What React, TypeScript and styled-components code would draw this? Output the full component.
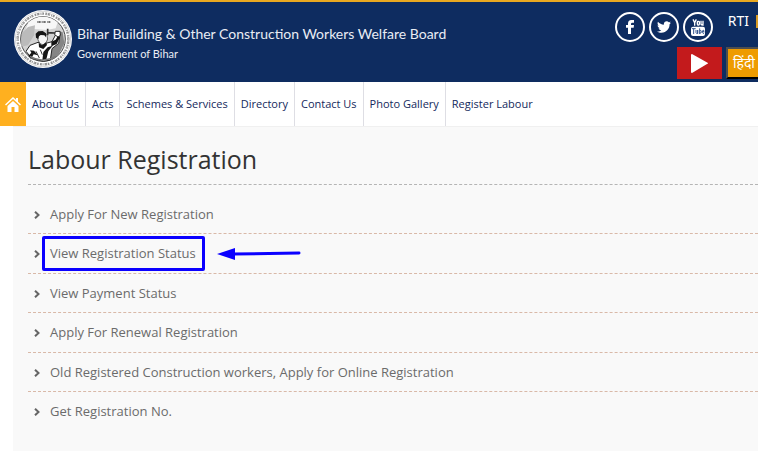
import React from "react";
import styled, { createGlobalStyle } from "styled-components";
import { FaTwitter } from "react-icons/fa";

const GlobalStyle = createGlobalStyle`
  *, *::before, *::after { box-sizing: border-box; }
  body {
    margin: 0;
    background: #fff;
    font-family: "Open Sans", "Noto Sans", sans-serif;
    overflow-x: hidden;
  }
`;

const Header = styled.header`
  display: flex;
  justify-content: space-between;
  align-items: flex-start;
  min-height: 82px;
  padding-left: 14px;
  border-top: 2px solid #e9a820;
  background: #0e2c60;
  color: #fff;
`;

const Brand = styled.a`
  display: flex;
  align-items: center;
  gap: 5px;
  padding-top: 8px;
  color: #e9edf4;
  text-decoration: none;
  white-space: nowrap;
`;

const BrandText = styled.span`
  display: flex;
  flex-direction: column;
  padding-top: 8px;
`;

const BrandTitle = styled.strong`
  font-family: Lato, sans-serif;
  font-size: 14px;
  font-weight: 400;
  line-height: 22px;
`;

const BrandSubtitle = styled.span`
  font-family: Lato, sans-serif;
  font-size: 11px;
  line-height: 18px;
`;

const Tools = styled.div`
  display: flex;
  flex-direction: column;
  align-items: flex-end;
  gap: 5px;
  padding-top: 10px;
`;

const ToolRow = styled.div`
  display: flex;
  gap: 4px;
`;

const Social = styled.a`
  display: flex;
  align-items: center;
  justify-content: center;
  width: 30px;
  height: 30px;
  border: 2px solid #fff;
  border-radius: 50%;
  color: #fff;
`;

const TopLink = styled.a`
  display: flex;
  padding-left: 11px;
  color: #fff;
  font-family: "Noto Sans", sans-serif;
  font-size: 14px;
  line-height: 18px;
  text-decoration: none;

  &::after {
    content: "";
    width: 2px;
    height: 13px;
    margin: 3px 0 0 7px;
    background: #d79a24;
  }
`;

const PlayButton = styled.button`
  display: flex;
  align-items: center;
  justify-content: center;
  width: 45px;
  height: 32px;
  padding: 0;
  border: 0;
  background: #c31a1c;
`;

const LanguageButton = styled.button`
  height: 32px;
  padding: 0 3px 0 5px;
  border: solid #4e4e4e;
  border-width: 2px 0 2px 2px;
  border-bottom-color: #000;
  background: #ee9b00;
  color: #fff;
  font-family: "Noto Sans", "Noto Sans Devanagari", sans-serif;
  font-size: 14px;
  line-height: 28px;
`;

const Nav = styled.nav`
  display: flex;
  height: 44px;
  background: #fff;
`;

const HomeLink = styled.a`
  display: flex;
  align-items: center;
  justify-content: center;
  width: 26px;
  background: #ffb01f;
`;

const NavLink = styled.a<{ $last?: boolean }>`
  padding: 0 6px;
  border-right: ${(p) => (p.$last ? "0" : "1px solid #dedee4")};
  color: #14295c;
  font-size: 11px;
  line-height: 44px;
  text-decoration: none;
  white-space: nowrap;
`;

const Panel = styled.main`
  min-height: calc(100vh - 126px);
  margin-left: 13px;
  padding: 14px 0 20px 15px;
  border-top: 1px solid #f0f0f0;
  background: #f9f9f9;
`;

const Heading = styled.h1`
  margin: 0;
  padding-bottom: 7px;
  border-bottom: 1px dashed #b5b5b5;
  color: #333;
  font-size: 25px;
  font-weight: 400;
  line-height: 36px;
`;

const Links = styled.ul`
  display: grid;
  grid-auto-rows: minmax(39px, auto) minmax(40px, auto);
  margin: 10px 0 0;
  padding: 0;
  list-style: none;
`;

const Item = styled.li`
  padding-top: 10px;
  border-bottom: 1px dashed #d9b9a8;

  &:last-child { border-bottom-color: transparent; }
`;

const ItemLink = styled.a`
  display: inline-flex;
  align-items: center;
  gap: 10px;
  padding-left: 6px;
  color: #6b6b6b;
  font-size: 13px;
  line-height: 18px;
  text-decoration: none;
  vertical-align: top;
`;

const Chevron = styled.svg`
  margin-top: 2px;
`;

const Label = styled.span`
  position: relative;
`;

const Marker = styled.span`
  position: absolute;
  inset: -8px -9px -9px -8px;
  border: 3px solid #0b00ff;
  border-radius: 2px;
`;

const Arrow = styled.svg`
  position: absolute;
  left: calc(100% + 21px);
  top: 3px;
`;

function Emblem() {
  return (
    <svg width="58" height="58" viewBox="0 0 174 174" role="img" aria-label="Board emblem">
      <circle cx="87" cy="87" r="87" fill="#fff" />
      <circle cx="87" cy="87" r="83" fill="none" stroke="#c4c4c4" strokeWidth="2" />
      <circle cx="87" cy="87" r="76" fill="none" stroke="#909090" strokeWidth="7" strokeDasharray="5 2 8 3 3 2 6 4" />
      <circle cx="87" cy="87" r="76" fill="none" stroke="#eee" strokeWidth="2" strokeDasharray="3 5" />
      <circle cx="87" cy="87" r="67" fill="#d2d2d2" stroke="#4b4b4b" strokeWidth="3" />
      <path d="M43 37a66 66 0 0 1 88 0l-6 18-27 5-37-3-32 19z" fill="#f7f7f7" />
      <path d="M70 36h12m3 0h11m4 0h9" stroke="#444" strokeWidth="5" strokeDasharray="4 1" />
      <path d="M24 70l18-19 21-5-3 30-18 30-21 4z" fill="#bbb" />
      <path d="M132 62l14 5 5 33-17 34-24 16-17-9 5-28 31-24z" fill="#858585" />
      <path d="M36 124l12-18 24-9 20 4 22-6 12-23 12 2-4 26-20 16-5 34-21 4-34-8z" fill="#fff" stroke="#242424" strokeWidth="3" />
      <path d="M70 76l2 14 6 11 10 4 8-6 5-12-3-14-13-4z" fill="#f5f5f5" stroke="#222" strokeWidth="2" />
      <path d="M66 83l-1-12 8-7 13-1 10 7 0 12-5-6-11-1-5 4-2 8zM74 98l10 8 12-9 3 8-11 12-13-5zM48 121l12 1 12 14-13-3-8 14-8-9 9-10zM88 126l13-14 15-5-13 17-6 24-12 3zM112 95l13-6 6-10 7 3-10 20-16 7z" fill="#151515" />
      <path d="M122 74l2-10 14 0 1 12-7 5z" fill="#fff" stroke="#222" strokeWidth="3" />
      <path d="M99 68l24 1M101 56v20" stroke="#333" strokeWidth="5" />
      <path d="M48 139c22 13 51 15 78 0" fill="none" stroke="#777" strokeWidth="4" />
      <path d="M66 124l10 20m3-25l6 15" stroke="#333" strokeWidth="3" />
    </svg>
  );
}

function FacebookMark() {
  return (
    <svg width="8" height="14" viewBox="0 0 24 42" aria-hidden="true">
      <path d="M6 42V23H0V15H6V11Q6 0 16 0H24V8H19Q15 8 15 12V15H24L23 23H15V42z" fill="currentColor" />
    </svg>
  );
}

function YouTubeMark() {
  return (
    <svg width="14" height="17" viewBox="0 0 42 51" aria-hidden="true">
      <rect x="0" y="23" width="42" height="28" rx="6" fill="#fff" />
      <g fill="none" stroke="#fff" strokeWidth="4">
        <path d="M6 1l5 10 5-10M11 10v10" />
        <rect x="19" y="7" width="6" height="11" rx="2" />
        <path d="M30 5v10q0 4 6 1V5v15" />
      </g>
      <g fill="none" stroke="#34568f" strokeWidth="3">
        <path d="M3 29h11M8 29v16M15 33v8q1 4 5 1v-9 12M26 28v17M26 36q5-4 5 2t-5 4M39 41q-1 4-3 2t-1-7 4-1v3h-5" />
      </g>
    </svg>
  );
}

const navItems = [
  "About Us",
  "Acts",
  "Schemes & Services",
  "Directory",
  "Contact Us",
  "Photo Gallery",
  "Register Labour",
];

const services = [
  { label: "Apply For New Registration" },
  { label: "View Registration Status", marked: true },
  { label: "View Payment Status" },
  { label: "Apply For Renewal Registration" },
  { label: "Old Registered Construction workers, Apply for Online Registration" },
  { label: "Get Registration No." },
];

export default function App() {
  return (
    <>
      <GlobalStyle />
      <Header>
        <Brand href="#">
          <Emblem />
          <BrandText>
            <BrandTitle>Bihar Building &amp; Other Construction Workers Welfare Board</BrandTitle>
            <BrandSubtitle>Government of Bihar</BrandSubtitle>
          </BrandText>
        </Brand>
        <Tools>
          <ToolRow>
            <Social href="#" aria-label="Facebook"><FacebookMark /></Social>
            <Social href="#" aria-label="Twitter"><FaTwitter size={14} /></Social>
            <Social href="#" aria-label="YouTube"><YouTubeMark /></Social>
            <TopLink href="#">RTI</TopLink>
          </ToolRow>
          <ToolRow>
            <PlayButton type="button" aria-label="Play video">
              <svg width="17" height="19" viewBox="0 0 17 19" aria-hidden="true">
                <path d="M0 1Q0 0 1 0L17 9Q17 10 16 10L1 19Q0 19 0 18z" fill="#fff" />
              </svg>
            </PlayButton>
            <LanguageButton type="button" lang="hi">हिंदी</LanguageButton>
          </ToolRow>
        </Tools>
      </Header>
      <Nav>
        <HomeLink href="#" aria-label="Home">
          <svg width="16" height="15" viewBox="0 0 16 15" aria-hidden="true">
            <path d="M0 7.5L8 0l3 2.8V1h2v3.7l3 2.8-1 1-7-6.4-7 6.4z" fill="#fff" />
            <path d="M2.5 9L8 4l5.500 5v6h-4v-5h-3v5h-4z" fill="#fff" />
          </svg>
        </HomeLink>
        {navItems.map((label, i) => (
          <NavLink href="#" key={label} $last={i === navItems.length - 1}>{label}</NavLink>
        ))}
      </Nav>
      <Panel>
        <Heading>Labour Registration</Heading>
        <Links>
          {services.map(({ label, marked }) => (
            <Item key={label}>
              <ItemLink href="#">
                <Chevron width="6" height="8" viewBox="0 0 6 8" aria-hidden="true">
                  <path d="M1 .7L4.500 4 1 7.300" fill="none" stroke="#666" strokeWidth="2" />
                </Chevron>
                <Label>
                  {label}
                  {marked && (
                    <>
                      <Marker />
                      <Arrow width="84" height="13" viewBox="0 0 84 13" aria-hidden="true">
                        <path d="M16 7L82 6" stroke="#0b00ff" strokeWidth="3" strokeLinecap="round" />
                        <path d="M0 7L18 1V13z" fill="#0b00ff" />
                      </Arrow>
                    </>
                  )}
                </Label>
              </ItemLink>
            </Item>
          ))}
        </Links>
      </Panel>
    </>
  );
}
